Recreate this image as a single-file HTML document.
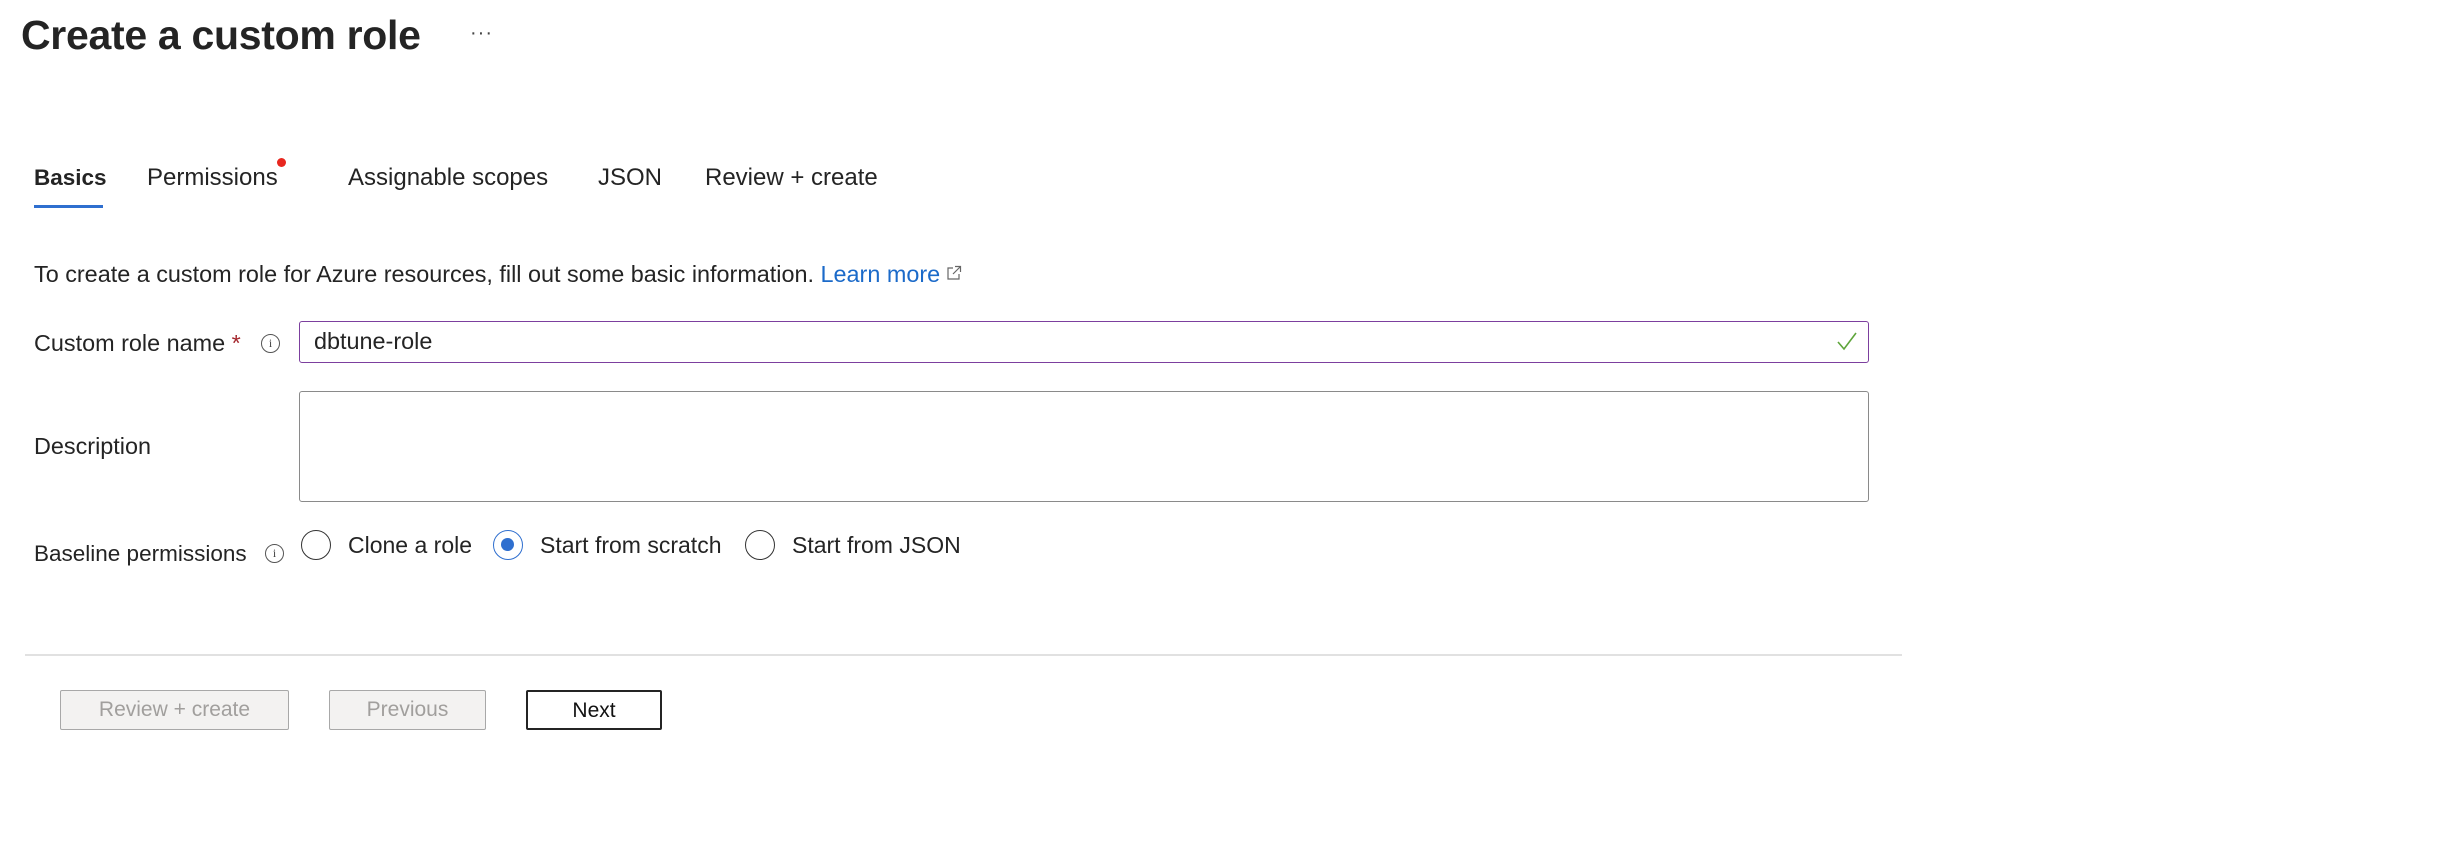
<!DOCTYPE html>
<html><head><meta charset="utf-8"><style>
html,body{margin:0;padding:0;background:#fff;width:2456px;height:856px;overflow:hidden;font-family:"Liberation Sans",sans-serif;color:#242424}
.a{position:absolute;white-space:nowrap}
.t{font-size:24px;top:164px}
.l{font-size:23.4px}
.r{font-size:23px}
.info{position:absolute;width:19px;height:19px;border:1.5px solid #555;border-radius:50%;box-sizing:border-box;font-size:12px;text-align:center;line-height:16px;color:#444;font-family:"Liberation Serif",serif}
.radio{position:absolute;width:30px;height:30px;border:1.5px solid #333;border-radius:50%;box-sizing:border-box}
.btn{position:absolute;top:690px;height:40px;box-sizing:border-box;font-size:21px;text-align:center;line-height:37px;border-radius:2px}
.dis{background:#f3f2f1;border:1.5px solid #a8a8a8;color:#a19f9d}
</style></head><body>
<div class="a" style="left:21px;top:12px;font-size:41px;font-weight:bold;letter-spacing:-0.3px;color:#242424">Create a custom role</div>
<div class="a" style="left:470px;top:22px;font-size:20px;color:#444;letter-spacing:1px">···</div>

<div class="a t" style="left:34px;font-weight:bold;font-size:22.5px;top:165px">Basics</div>
<div style="position:absolute;left:34px;top:205px;width:69px;height:3px;background:#2f6fcf"></div>
<div class="a t" style="left:147px">Permissions</div>
<div style="position:absolute;left:277px;top:158px;width:9px;height:9px;border-radius:50%;background:#e8271f"></div>
<div class="a t" style="left:348px">Assignable scopes</div>
<div class="a t" style="left:598px">JSON</div>
<div class="a t" style="left:705px">Review + create</div>

<div class="a l" style="left:34px;top:261px">To create a custom role for Azure resources, fill out some basic information. <span style="color:#1b6ac9">Learn more</span></div>
<svg style="position:absolute;left:946px;top:265px" width="16" height="16" viewBox="0 0 16 16" fill="none" stroke="#666" stroke-width="1.2"><path d="M7 3H2v11h11V9M9 1.5h5.5V7M14.5 1.5 7 9"/></svg>

<div class="a l" style="left:34px;top:330px">Custom role name <span style="color:#a4262c">*</span></div>
<div class="info" style="left:261px;top:334px">i</div>
<div style="position:absolute;left:299px;top:321px;width:1570px;height:42px;border:1.5px solid #7c3f9e;border-radius:3px;box-sizing:border-box"></div>
<div class="a l" style="left:314px;top:328px">dbtune-role</div>
<svg style="position:absolute;left:1836px;top:331px" width="22" height="20" viewBox="0 0 22 20" fill="none" stroke="#5ea53b" stroke-width="1.6"><path d="M2 11l6 7L20 2"/></svg>

<div class="a l" style="left:34px;top:433px">Description</div>
<div style="position:absolute;left:299px;top:391px;width:1570px;height:111px;border:1.5px solid #8a8a8a;border-radius:3px;box-sizing:border-box"></div>

<div class="a" style="left:34px;top:541px;font-size:22.5px">Baseline permissions</div>
<div class="info" style="left:265px;top:544px">i</div>
<div class="radio" style="left:301px;top:530px"></div>
<div class="a r" style="left:348px;top:532px">Clone a role</div>
<div class="radio" style="left:493px;top:530px;border-color:#2f6fcf"><div style="position:absolute;left:7px;top:7px;width:13px;height:13px;border-radius:50%;background:#2f6fcf"></div></div>
<div class="a r" style="left:540px;top:532px">Start from scratch</div>
<div class="radio" style="left:745px;top:530px"></div>
<div class="a r" style="left:792px;top:532px">Start from JSON</div>

<div style="position:absolute;left:25px;top:654px;width:1877px;height:2px;background:#e1e1e1"></div>

<div class="btn dis" style="left:60px;width:229px">Review + create</div>
<div class="btn dis" style="left:329px;width:157px">Previous</div>
<div class="btn" style="left:526px;width:136px;border:2px solid #242424;color:#111">Next</div>
</body></html>
